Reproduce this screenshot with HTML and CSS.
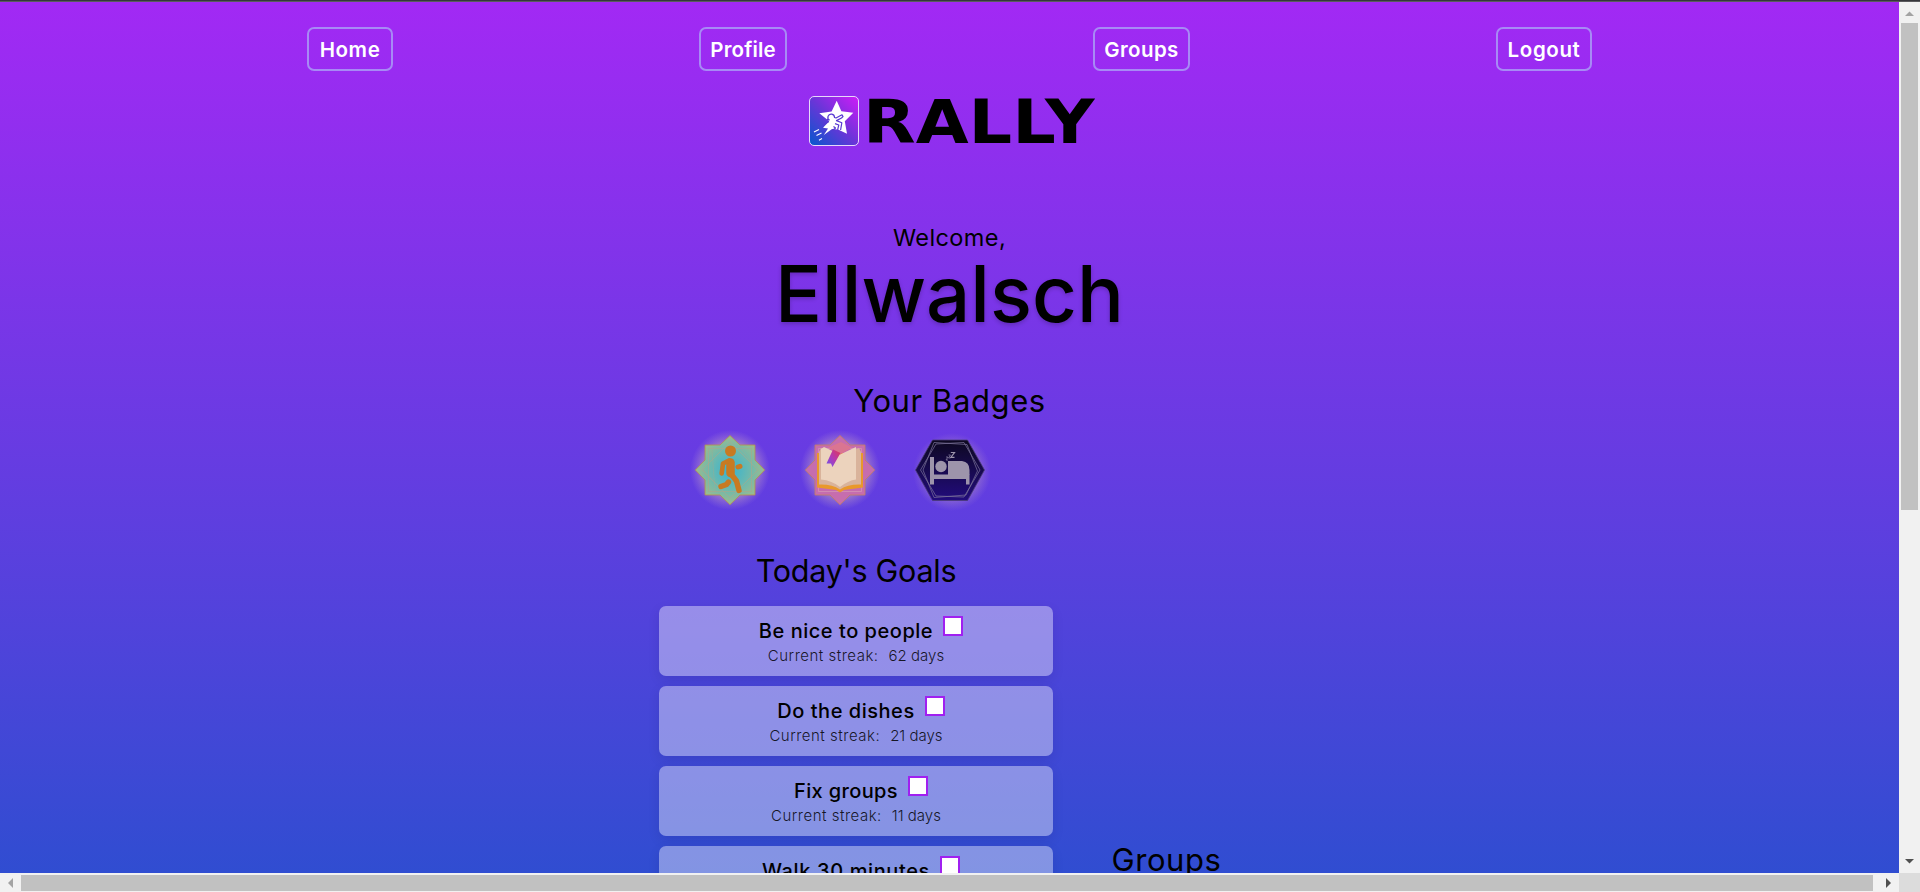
FILE: index.html
```html
<!DOCTYPE html>
<html lang="en">
<head>
<meta charset="utf-8">
<title>Rally</title>
<link rel="stylesheet" href="styles.css">
</head>
<body>
<div class="window">
  <div class="edge"></div>
  <div class="viewport">
    <nav class="nav">
      <a class="nav-link home">Home</a>
      <a class="nav-link profile">Profile</a>
      <a class="nav-link groups-link">Groups</a>
      <a class="nav-link logout">Logout</a>
    </nav>
    <header class="brand">
      <svg class="logo" viewBox="0 0 50 50">
        <defs><linearGradient id="lg" x1="0" y1="1" x2="1" y2="0"><stop offset="0" stop-color="#0458cc"/><stop offset=".5" stop-color="#6a35d8"/><stop offset="1" stop-color="#cf1cf8"/></linearGradient></defs>
        <rect x=".5" y=".5" width="49" height="49" rx="4.5" fill="url(#lg)" stroke="#e6d8fa"/>
        <path d="M27.700 4.700 32.400 15.200 44.300 16.700 35.800 25.300 38 37.700 29 33.500 23 33 15.500 38.500 14.500 39.500 19 32.500 14 31.700 20 25.500 17.500 23 10.300 17.300 22.600 15.600Z" fill="#fff"/>
        <g fill="none" stroke="#5638d2" stroke-width="1.200" stroke-linejoin="round">
          <path d="M20 25.500 14.500 28.500M19.500 24.500 18 23M20.600 24.300A3.300 3.300 0 1 1 25.500 21.500L27 22 33 18.800 34 20.500 32.500 22 27.500 24.600 32.800 26.800 31.600 34M26 27.600 29.800 29 28.600 33.800M24.500 30.500 26.500 32 23.500 34.500"/>
        </g>
        <path d="M5 36 10 33.600M7.500 39.500 12.500 37M10 44.200 13 42.600" stroke="#fff" stroke-width="1.100"/>
      </svg>
      <span class="wordmark">RALLY</span>
    </header>
    <p class="welcome">Welcome,</p>
    <h1 class="username">Ellwalsch</h1>
    <h2 class="heading badges-heading">Your Badges</h2>
    <div class="badges">
      <svg class="badge" viewBox="0 0 70 70">
        <defs>
          <radialGradient id="glow"><stop offset="0" stop-color="#c8a5b4" stop-opacity=".8"/><stop offset=".65" stop-color="#c8a5b4" stop-opacity=".6"/><stop offset="1" stop-color="#b090d0" stop-opacity="0"/></radialGradient>
          <radialGradient id="b1"><stop offset="0" stop-color="#34b3d4"/><stop offset=".55" stop-color="#6bb9af"/><stop offset="1" stop-color="#9dbb8d"/></radialGradient>
        </defs>
        <circle cx="35" cy="35" r="40" fill="url(#glow)"/>
        <path d="M35 .5 45 10H60V25L69.700 35 60 45V60H45L35 69.700 25 60H10V45L.3 35 10 25V10H25Z" fill="url(#b1)" stroke="#b5904a" stroke-width=".8"/>
        <g fill="none" stroke="#a9a78b" stroke-width=".6"><path d="M13.500 13.500h43v43h-43zM35 7 63 35 35 63 7 35Z"/><path d="M17 15 20 57M43 10 57 28M8 35 26 54" opacity=".6"/></g>
        <g fill="none" stroke="#c87a22" stroke-linecap="round" stroke-linejoin="round">
          <circle cx="35.500" cy="16" r="5.500" fill="#c87a22" stroke="none"/>
          <path d="M35.500 27.500V38" stroke-width="8.500"/>
          <path d="M34 25.500 28 28.500 26.700 38.500" stroke-width="4.600"/>
          <path d="M43 32 45 31.300" stroke-width="5"/>
          <path d="M36 39 41.500 46 44 55.500" stroke-width="5.400"/>
          <path d="M33.500 47 31.500 49.500 26 51.500" stroke-width="5.400"/>
        </g>
      </svg>
      <svg class="badge" viewBox="0 0 70 70">
        <defs><linearGradient id="rb" x1="1" y1="0" x2="0" y2="1"><stop offset="0" stop-color="#df3b54"/><stop offset=".5" stop-color="#b639b1"/><stop offset="1" stop-color="#6953ee"/></linearGradient></defs>
        <circle cx="35" cy="35" r="40" fill="url(#glow)"/>
        <path d="M35 .5 45 10H60V25L69.700 35 60 45V60H45L35 69.700 25 60H10V45L.3 35 10 25V10H25Z" fill="#c66dae" stroke="#c47d60" stroke-width=".8"/>
        <path d="M13.500 13.500h43v43h-43z" fill="none" stroke="#d8a0b8" stroke-width=".6"/>
        <path d="M12 18H58V52.500L39 55 35 57.500 31 55 12 52.500Z" fill="#e9982b"/>
        <path d="M14 17 16 13 35 21 54 13 56 17V49.500Q43 49 35 54.500 27 49 14 49.500Z" fill="#d9b39b"/>
        <path d="M19 12 35 19.500 51 12V44.500Q43 45.500 35 52 27 45.500 16 44.500V14Z" fill="#ecd3bd"/>
        <path d="M23 12.500 35 19.500 47 12.500 36 7Z" fill="#da7591"/>
        <path d="M28 14.500 35.500 18 27.500 32 26 28.500 21.500 28.500Z" fill="url(#rb)"/>
      </svg>
      <svg class="badge" viewBox="0 0 70 70">
        <defs><linearGradient id="b3" x1="0" y1="0" x2="0" y2="1"><stop offset="0" stop-color="#0d0820"/><stop offset="1" stop-color="#220c7d"/></linearGradient></defs>
        <circle cx="37" cy="37" r="39" fill="url(#glow)" opacity=".7"/>
        <path d="M17.500 5H52.500L69.500 35 52.500 65.500H17.500L.5 35Z" fill="url(#b3)" stroke="#4b3c78" stroke-width=".8"/>
        <path d="M21 9 49 7.500 65 35 49 62 21 61 5.500 35ZM19 7.500 52 9.500 62.500 36 51 60 19 62.500 8 35Z" fill="none" stroke="#7c749b" stroke-width=".7"/>
        <g fill="#9d94ab"><path d="M15 22h4v17.500h35.500V49.500H51V44H19v5.500H15z"/><circle cx="26" cy="31.500" r="5.700"/><path d="M33 26H47Q54.500 27 54.500 35V40H33Z"/></g>
        <path d="M31 22H33L31 25H33M33.500 20H35.500L33.500 23H35.500" fill="none" stroke="#847b9c" stroke-width=".8"/>
        <path d="M35.800 17.500H39.500L35.800 22.300H39.500" fill="none" stroke="#9d94ab" stroke-width="1.200"/>
      </svg>
    </div>
    <main class="columns">
      <section class="goals">
        <h2 class="heading goals-heading">Today's Goals</h2>
        <div class="goal-list">
          <article class="goal"><div class="goal-top"><span>Be nice to people</span><i class="check"></i></div><div class="streak"><span class="streak-label">Current streak:</span><span>62 days</span></div></article>
          <article class="goal"><div class="goal-top"><span>Do the dishes</span><i class="check"></i></div><div class="streak"><span class="streak-label">Current streak:</span><span>21 days</span></div></article>
          <article class="goal"><div class="goal-top snug"><span>Fix groups</span><i class="check"></i></div><div class="streak"><span class="streak-label">Current streak:</span><span>11 days</span></div></article>
          <article class="goal"><div class="goal-top loose"><span>Walk 30 minutes</span><i class="check"></i></div></article>
        </div>
      </section>
      <section class="groups"><h2 class="heading groups-heading">Groups</h2></section>
    </main>
  </div>
  <div class="vbar"><svg viewBox="0 0 21 21"><path d="M6 14 10.500 9.500 15 14Z" fill="#a3a3a3"/></svg><div class="vthumb"></div><svg class="end" viewBox="0 0 21 21"><path d="M6 7 10.500 11.500 15 7Z" fill="#505050"/></svg></div>
  <div class="hbar"><svg viewBox="0 0 21 19"><path d="M13 5V15L8 10Z" fill="#a3a3a3"/></svg><div class="hthumb"></div><svg viewBox="0 0 26 19"><path d="M13 5V15L18 10Z" fill="#505050"/></svg></div>
  <div class="corner"></div>
</div>
</body>
</html>
```
FILE: styles.css
```css
* { box-sizing: border-box; }
body { margin: 0; font-family: Inter, "Open Sans", sans-serif; color: #000; overflow: hidden; }
h1, h2, p { margin: 0; font-weight: 400; }
.window { width: 1920px; height: 892px; display: grid; grid-template: 2px 871px 19px / 1899px 21px; }
.edge { grid-column: 1 / 3; background: #5a5a5c; border-top: 1px solid #36363b; }
.viewport { overflow: hidden; background: linear-gradient(#a229f4, #304dd1); }
.nav { display: flex; justify-content: space-evenly; padding: 25px 1px 0; }
.nav-link { height: 44px; border: 2px solid #a78af5; border-radius: 7px; display: flex; align-items: center; justify-content: center; font-size: 20.5px; font-weight: 600; letter-spacing: .6px; color: #fff; }
.home { width: 86px; }
.profile { width: 88px; letter-spacing: .15px; }
.groups-link { width: 97px; letter-spacing: .4px; }
.logout { width: 96px; }
.brand { display: flex; align-items: center; gap: 4px; height: 50px; margin-top: 25px; padding-left: 809px; }
.logo { width: 50px; height: 50px; }
.wordmark { width: 206px; padding-top: 2px; font: bold 60px/50px "DejaVu Sans", sans-serif; transform: scaleX(1.14); transform-origin: left; }
.welcome { margin-top: 77px; font-size: 23.5px; line-height: 30px; letter-spacing: .4px; text-align: center; }
.username { font-size: 78px; line-height: 81px; text-align: center; font-weight: 450; text-shadow: 0 2px 4px rgba(0,0,0,.2); }
.heading { font-size: 31px; line-height: 40px; text-align: center; letter-spacing: .6px; }
.goals-heading { font-size: 30.5px; letter-spacing: -.25px; }
.badges-heading { margin-top: 47px; }
.badges { display: grid; grid-template-columns: repeat(5, 70px); gap: 40px; justify-content: center; margin-top: 14px; }
.badge { width: 70px; height: 70px; overflow: visible; }
.columns { display: grid; grid-template-columns: 394px 147px; column-gap: 40px; justify-content: center; margin-top: 46px; }
.groups { padding-top: 289px; }
.goal-list { display: grid; gap: 10px; margin-top: 15px; }
.goal { height: 70px; padding-top: 13px; border-radius: 7px; background: rgba(255,255,255,.4); box-shadow: 0 4px 12px rgba(0,0,60,.1); }
.goal-top { display: flex; justify-content: center; gap: 10px; padding-left: 10px; height: 24px; line-height: 24px; font-size: 20px; font-weight: 500; letter-spacing: .53px; }
.snug { letter-spacing: .37px; }
.loose { letter-spacing: .62px; }
.check { width: 20px; height: 20px; margin-top: -3px; background: #fff; border: 2px solid #a020f0; }
.streak { display: flex; justify-content: center; gap: 10px; margin-top: 3px; line-height: 20px; font-size: 15px; font-weight: 300; color: rgba(0,0,0,.85); }
.streak-label { letter-spacing: .5px; }
.vbar { background: #f1f1f1; display: flex; flex-direction: column; }
.vbar svg { width: 21px; height: 21px; }
.vthumb { width: 17px; height: 487px; margin-left: 2px; background: #c1c1c1; }
.vbar .end { margin-top: auto; }
.hbar { background: #f1f1f1; display: flex; }
.hbar svg { height: 19px; }
.hthumb { width: 1852px; height: 16px; margin-top: 2px; background: #c1c1c1; }
.corner { background: #dcdcdc; }
```
